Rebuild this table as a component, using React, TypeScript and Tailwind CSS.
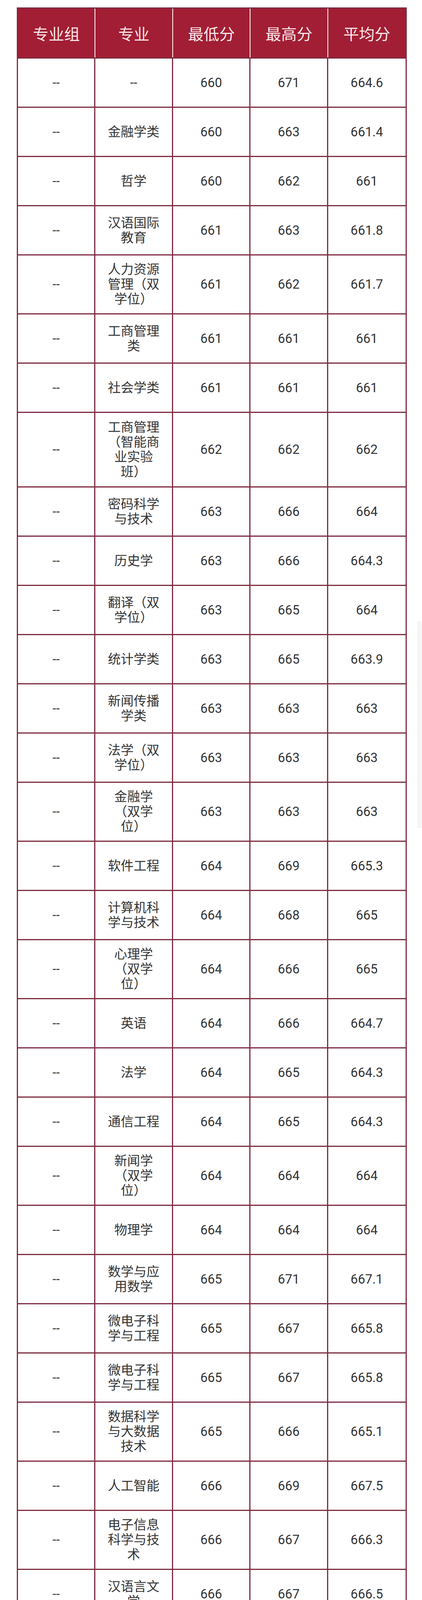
type Row = { lines: 1 | 3 | 4; cells: string[] }

const data: [string, string, string, string][] = [
  ['--', '660', '671', '664.6'],
  ['金融学类', '660', '663', '661.4'],
  ['哲学', '660', '662', '661'],
  ['汉语国际教育', '661', '663', '661.8'],
  ['人力资源管理（双学位）', '661', '662', '661.7'],
  ['工商管理类', '661', '661', '661'],
  ['社会学类', '661', '661', '661'],
  ['工商管理（智能商业实验班）', '662', '662', '662'],
  ['密码科学与技术', '663', '666', '664'],
  ['历史学', '663', '666', '664.3'],
  ['翻译（双学位）', '663', '665', '664'],
  ['统计学类', '663', '665', '663.9'],
  ['新闻传播学类', '663', '663', '663'],
  ['法学（双学位）', '663', '663', '663'],
  ['金融学（双学位）', '663', '663', '663'],
  ['软件工程', '664', '669', '665.3'],
  ['计算机科学与技术', '664', '668', '665'],
  ['心理学（双学位）', '664', '666', '665'],
  ['英语', '664', '666', '664.7'],
  ['法学', '664', '665', '664.3'],
  ['通信工程', '664', '665', '664.3'],
  ['新闻学（双学位）', '664', '664', '664'],
  ['物理学', '664', '664', '664'],
  ['数学与应用数学', '665', '671', '667.1'],
  ['微电子科学与工程', '665', '667', '665.8'],
  ['微电子科学与工程', '665', '667', '665.8'],
  ['数据科学与大数据技术', '665', '666', '665.1'],
  ['人工智能', '666', '669', '667.5'],
  ['电子信息科学与技术', '666', '667', '666.3'],
  ['汉语言文学', '666', '667', '666.5'],
  ['统计学（双学位）', '668', '669', '668.3'],
]

// rows whose major name wraps to three or four lines are taller
const threeLine = new Set([
  '人力资源管理（双学位）',
  '金融学（双学位）',
  '心理学（双学位）',
  '新闻学（双学位）',
  '数据科学与大数据技术',
  '电子信息科学与技术',
  '统计学（双学位）',
])

const rows: Row[] = data.map((d) => ({
  lines: d[0] === '工商管理（智能商业实验班）' ? 4 : threeLine.has(d[0]) ? 3 : 1,
  cells: ['--', ...d],
}))

const heightClass = {
  1: 'h-[126px]',
  3: 'h-[151px]',
  4: 'h-[191px]',
}

const headers = ['专业组', '专业', '最低分', '最高分', '平均分']

export default function App() {
  return (
    <div
      className="relative h-[4325px] bg-white flex flex-col overflow-hidden"
      style={{ fontFamily: 'Roboto, "Noto Sans CJK SC", sans-serif' }}
    >
      {/* faint strip on the right edge */}
      <div className="absolute right-0 top-[1590px] h-[530px] w-[12px] bg-[#f6f6f6]" />

      <div className="ml-[43px] mt-[19px] w-[998px] border-[3px] border-[#7d2a40]">
        <div className="grid grid-cols-5 h-[125px] bg-[#a21e34] divide-x-2 divide-white">
          {headers.map((h) => (
            <div
              key={h}
              className="flex items-center justify-center text-[40px] leading-none text-[#fbe7ea]"
              style={{ fontFamily: '"Noto Sans CJK SC", sans-serif' }}
            >
              {h}
            </div>
          ))}
        </div>

        {rows.map((r, i) => (
          <div
            key={i}
            className={`${heightClass[r.lines]} grid grid-cols-5 border-t-[3px] border-[#7d2a40] divide-x-[3px] divide-[#7d2a40]`}
          >
            {r.cells.map((c, j) => (
              <div
                key={j}
                className="flex items-center justify-center text-center px-[26px] text-[33px] leading-[38px] text-[#333333]"
              >
                {c}
              </div>
            ))}
          </div>
        ))}
      </div>

      <div className="flex-1" />
      <div className="h-[2px] bg-[#f2eded]" />
    </div>
  )
}
